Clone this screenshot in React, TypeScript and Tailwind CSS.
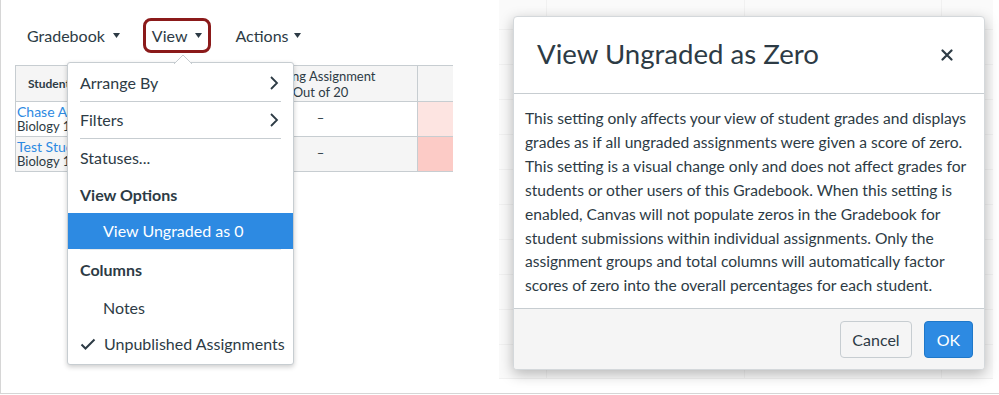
import React from "react";

const Caret = () => (
  <svg width="7" height="5" viewBox="0 0 7 5" className="shrink-0">
    <polygon points="0,0 7,0 3.5,5" fill="#2d3b45" />
  </svg>
);

const Chevron = () => (
  <svg width="10" height="16" viewBox="0 0 10 16" className="shrink-0">
    <polyline points="2,2 8,8 2,14" fill="none" stroke="#2d3b45" strokeWidth="1.8" />
  </svg>
);

const Check = () => (
  <svg width="16" height="13" viewBox="0 0 16 13" className="shrink-0">
    <polyline points="1.5,6.5 5.5,10.5 14.5,1.5" fill="none" stroke="#2d3b45" strokeWidth="2" />
  </svg>
);

const CloseX = () => (
  <svg width="12" height="12" viewBox="0 0 12 12">
    <path d="M1.5 1.5 L10.5 10.5 M10.5 1.5 L1.5 10.5" stroke="#2d3b45" strokeWidth="2.2" strokeLinecap="round" />
  </svg>
);

const bodyLines = [
  "This setting only affects your view of student grades and displays",
  "grades as if all ungraded assignments were given a score of zero.",
  "This setting is a visual change only and does not affect grades for",
  "students or other users of this Gradebook. When this setting is",
  "enabled, Canvas will not populate zeros in the Gradebook for",
  "student submissions within individual assignments. Only the",
  "assignment groups and total columns will automatically factor",
  "scores of zero into the overall percentages for each student.",
];

const Separator = () => <div className="mx-[12px] h-px bg-[#c7cdd1]" />;

function ViewMenu() {
  return (
    <div className="absolute left-[66px] top-[62px] w-[227px] h-[303px] bg-white border border-[#c7cdd1] rounded-[3px] shadow-[0_2px_5px_rgba(0,0,0,0.2)] pt-[2px] text-[16px] text-[#2d3b45]">
      {/* caret */}
      <svg width="18" height="9" viewBox="0 0 18 9" className="absolute left-[106px] -top-[8px]">
        <polygon points="0,9 9,0 18,9" fill="#ffffff" />
        <polyline points="0,9 9,0 18,9" fill="none" stroke="#c7cdd1" strokeWidth="1" />
      </svg>
      <div className="h-[36px] flex items-center justify-between pl-[12px] pr-[14px]">
        <span>Arrange By</span>
        <Chevron />
      </div>
      <Separator />
      <div className="h-[36px] flex items-center justify-between pl-[12px] pr-[14px]">
        <span>Filters</span>
        <Chevron />
      </div>
      <Separator />
      <div className="h-[37px] flex items-center pl-[12px]">Statuses...</div>
      <div className="h-[37px] flex items-center pl-[12px] font-bold">View Options</div>
      <div className="h-[36px] flex items-center pl-[35px] bg-[#2d8ae2] text-white">View Ungraded as 0</div>
      <div className="mx-[12px] h-px bg-[#e4e8ea]" />
      <div className="h-[39px] flex items-center pl-[12px] font-bold">Columns</div>
      <div className="h-[37px] flex items-center pl-[35px]">Notes</div>
      <div className="h-[36px] flex items-center pl-[12px] gap-[8px]">
        <Check />
        <span>Unpublished Assignments</span>
      </div>
    </div>
  );
}

function GradeTable() {
  const rows = [
    { name: "Chase Adams", bg: "bg-white", pink: "bg-[#fde4e1]" },
    { name: "Test Student", bg: "bg-[#f5f5f5]", pink: "bg-[#fccbc6]" },
  ];
  return (
    <div className="ml-[14px] mt-[12px] w-[438px] overflow-hidden">
      <div className="w-[460px] border-l border-t border-[#c7cdd1]">
        <div className="flex h-[36px] bg-[#f5f5f5] border-b border-[#c7cdd1]">
          <div className="w-[208px] border-r border-[#c7cdd1] flex items-center pl-[12px] text-[12px] font-bold text-[#2d3b45]">
            Student Name
          </div>
          <div className="w-[194px] border-r border-[#c7cdd1] flex flex-col items-center justify-center text-[13px] leading-[16px] text-[#2d3b45]">
            <span>Testing Assignment</span>
            <span>Out of 20</span>
          </div>
          <div className="flex-1" />
        </div>
        {rows.map((r) => (
          <div key={r.name} className={`flex h-[35px] border-b border-[#c7cdd1] ${r.bg}`}>
            <div className="w-[208px] border-r border-[#c7cdd1] flex flex-col justify-center pl-[1px] leading-[14px]">
              <span className="text-[14px] text-[#2d8ae2]">{r.name}</span>
              <span className="text-[13px] text-[#2d3b45]">Biology 101</span>
            </div>
            <div className="w-[194px] border-r border-[#c7cdd1] flex items-center justify-center text-[13px] text-[#2d3b45]">
              –
            </div>
            <div className={`flex-1 ${r.pink}`} />
          </div>
        ))}
      </div>
    </div>
  );
}

function Backdrop() {
  const rows = [30, 35, 35, 35, 35, 35, 35, 35, 35, 35, 34];
  return (
    <div className="w-[494px] h-[379px] bg-[#fafafa] flex flex-col">
      {rows.map((h, i) => (
        <div key={i} className="flex border-b border-[#f1f1f1]" style={{ height: h }}>
          <div className="w-[48px] border-r border-[#f1f1f1]" />
          <div className="w-[198px] border-r border-[#f1f1f1]" />
          <div className="w-[197px] border-r border-[#f1f1f1]" />
          <div className="flex-1" />
        </div>
      ))}
    </div>
  );
}

function Modal() {
  return (
    <div className="absolute left-[14px] top-[16px] w-[472px] bg-white border border-[#d4d8db] rounded-[4px] shadow-[0_4px_14px_rgba(0,0,0,0.28)] text-[#2d3b45] overflow-hidden">
      <div className="h-[77px] flex items-center justify-between pl-[23px] pr-[31px] border-b border-[#c7cdd1]">
        <span className="text-[27.6px] -mt-[2px]">View Ungraded as Zero</span>
        <CloseX />
      </div>
      <div className="px-[11px] pt-[13px] pb-[9px] text-[15.6px] leading-[23.9px] h-[214px]">
        {bodyLines.map((l) => (
          <div key={l} className="whitespace-nowrap">
            {l}
          </div>
        ))}
      </div>
      <div className="h-[61px] bg-[#f5f5f5] border-t border-[#c7cdd1] flex items-start justify-end gap-[12px] pt-[12px] pr-[11px]">
        <button className="h-[37px] w-[72px] rounded-[4px] border border-[#c7cdd1] bg-[#f5f5f5] text-[16px] text-[#2d3b45]">
          Cancel
        </button>
        <button className="h-[37px] w-[49px] rounded-[4px] border border-[#1f78c9] bg-[#2d8ae2] text-[16px] text-white">
          OK
        </button>
      </div>
    </div>
  );
}

export default function App() {
  return (
    <div className="w-[999px] h-[395px] bg-white font-['Lato',sans-serif] overflow-hidden">
      <div className="h-[394px] flex border-l border-b border-[#d6d6d6]">
        <div className="w-[498px] relative">
          <div className="pt-[18px] flex items-center h-[53px] text-[16px] text-[#2d3b45]">
            <div className="ml-[26px] flex items-center gap-[8px]">
              <span>Gradebook</span>
              <Caret />
            </div>
            <div className="ml-[23px] h-[35px] flex items-center gap-[8px] pl-[6px] pr-[6px] border-[3px] border-[#8b1a1a] rounded-[8px]">
              <span>View</span>
              <Caret />
            </div>
            <div className="ml-[24px] flex items-center gap-[5px]">
              <span>Actions</span>
              <Caret />
            </div>
          </div>
          <GradeTable />
          <ViewMenu />
        </div>
        <div className="relative flex-1">
          <Backdrop />
          <Modal />
        </div>
      </div>
    </div>
  );
}
